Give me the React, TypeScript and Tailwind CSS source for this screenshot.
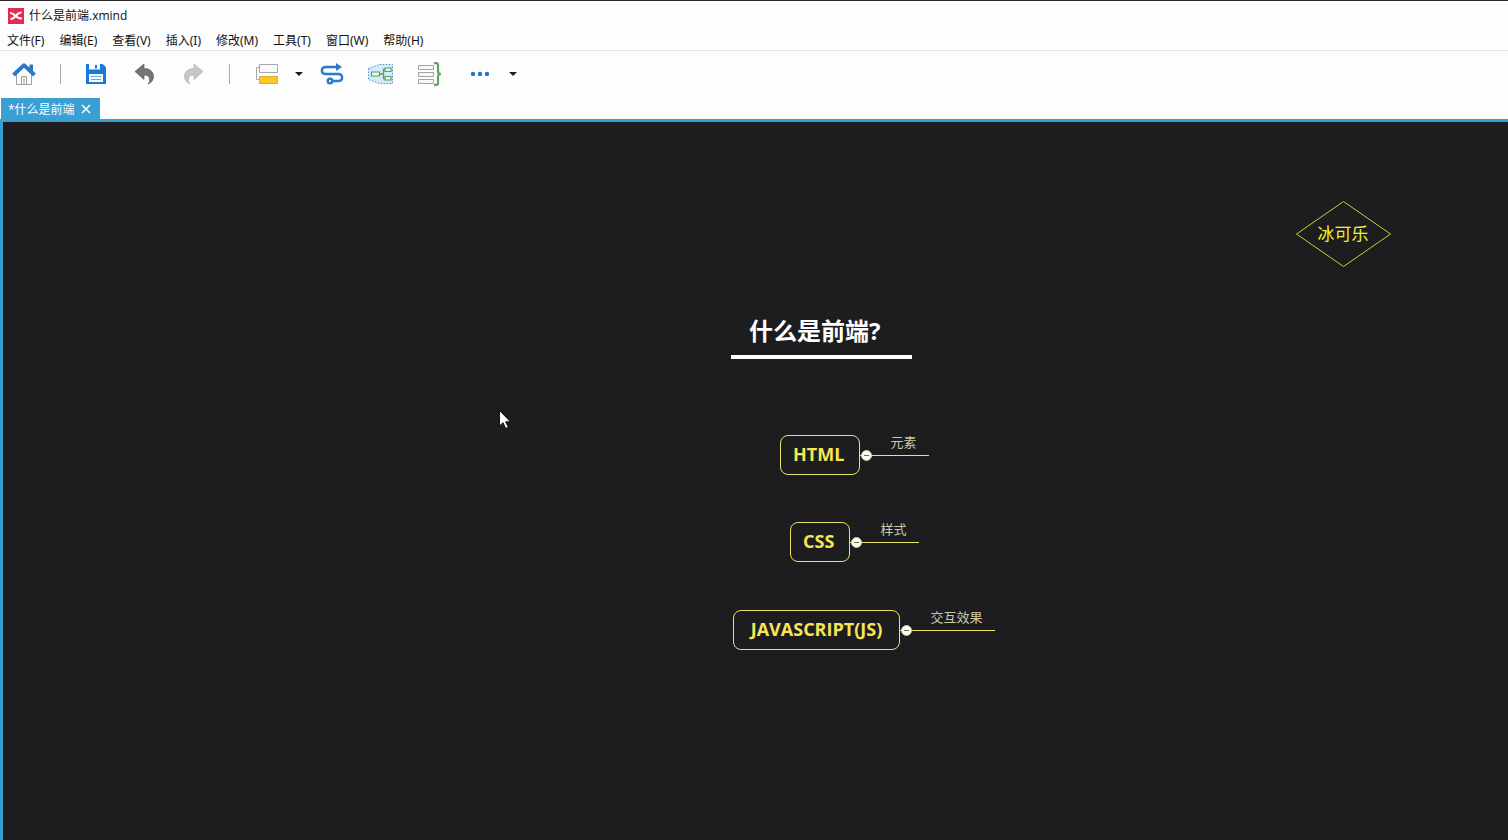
import type { ReactNode } from "react";

const menus = ["文件(F)", "编辑(E)", "查看(V)", "插入(I)", "修改(M)", "工具(T)", "窗口(W)", "帮助(H)"];

function ToolButton({ label, className = "w-6", children }: { label: string; className?: string; children: ReactNode }) {
    return (
        <button type="button" aria-label={label} className={`h-6 shrink-0 ${className}`}>
            {children}
        </button>
    );
}

function Caret({ label }: { label: string }) {
    return (
        <ToolButton label={label} className="w-[10px] -mx-2">
            <svg width="10" height="24" viewBox="0 0 10 24">
                <path d="M1 10h8L5 14z" fill="#1c1c1e" />
            </svg>
        </ToolButton>
    );
}

function Divider() {
    return <div className="h-5 w-px shrink-0 bg-[#a9a9a9]" />;
}

function Toolbar() {
    return (
        <div className="flex h-[47px] items-center gap-6 px-3 pb-[2px]">
            <ToolButton label="主页">
                <svg width="24" height="24" viewBox="0 0 24 24" fill="none">
                    <path d="M4.500 12v10.500h15V12L12 5z" fill="#fafafa" stroke="#a0a0a0" />
                    <path d="M9.500 22.500v-8h5v8M12 14.500v8" stroke="#a0a0a0" />
                    <path d="M17.500 2.500H21v7l-3.500-3z" fill="#2a72c6" />
                    <path d="M1.500 13L12 3.200 22.500 13" stroke="#2a76cc" strokeWidth="3.800" strokeLinejoin="round" />
                </svg>
            </ToolButton>
            <Divider />
            <ToolButton label="保存">
                <svg width="24" height="24" viewBox="0 0 24 24" fill="none">
                    <path d="M1 2h16.500L21 5v17H1z" fill="#1b79d8" />
                    <path d="M4 2h11v5.500H4z" fill="#f8fbff" />
                    <path d="M10 3h2v3.500h-2z" fill="#1b79d8" />
                    <path d="M4 12h14v8H4z" fill="#f8fbff" />
                    <path d="M6 14.500h10M6 17.500h10" stroke="#67a3dc" />
                </svg>
            </ToolButton>
            <ToolButton label="撤销">
                <svg width="24" height="24" viewBox="0 0 24 24">
                    <path d="M2 9.500L11 2v4.500c6 0 9.500 3.500 9.500 8 0 3.500-2 6-5.500 7.500 1.500-2 2-3.500 1.500-5.500-.5-2.500-2.500-3.500-5.500-3.500v4.500z" fill="#757575" stroke="#5c5c5c" strokeWidth=".7" />
                </svg>
            </ToolButton>
            <ToolButton label="重做">
                <svg width="24" height="24" viewBox="0 0 24 24">
                    <path d="M22 9.500L13 2v4.500c-6 0-9.500 3.500-9.500 8C3.500 18 5.500 20.500 9 22c-1.500-2-2-3.500-1.500-5.500.5-2.500 2.500-3.500 5.500-3.500v4.500z" fill="#c6c6c6" stroke="#b4b4b4" strokeWidth=".7" />
                </svg>
            </ToolButton>
            <Divider />
            <ToolButton label="主题">
                <svg width="24" height="24" viewBox="0 0 24 24" fill="none">
                    <path d="M5 5.500H2.500v12H5" stroke="#a6a8ad" />
                    <path d="M5.500 2.500h18v8h-18z" fill="#fcfcff" stroke="#a5a7b0" />
                    <path d="M5.500 14.500h18v7h-18z" fill="#f8c923" stroke="#dcae2a" />
                </svg>
            </ToolButton>
            <Caret label="主题选项" />
            <ToolButton label="联系">
                <svg width="24" height="24" viewBox="0 0 24 24" fill="none" stroke="#2b7bcc" strokeWidth="2.400">
                    <path d="M17 5H6C.5 5 .5 12 6 12h12c5.500 0 5.500 7 0 7h-5.500" />
                    <circle cx="10" cy="19" r="2.300" />
                    <path d="M16 1v8l6-4z" fill="#2b7bcc" stroke="none" />
                </svg>
            </ToolButton>
            <ToolButton label="外框" className="w-[26px]">
                <svg width="26" height="24" viewBox="0 0 26 24" fill="none">
                    <path d="M.5 6.500l11-4h13v19h-13l-11-4z" fill="#d3eaf8" />
                    <path d="M.5 6.500l11-4h13v19h-13l-11-4z" stroke="#4f8cc5" strokeDasharray="1.500 1.500" />
                    <path d="M11.500 12H15m3-4.500h-2.500v9H18" stroke="#58a05b" strokeWidth="1.300" />
                    <path d="M3.500 10h8v4h-8zM17 6h6v3.500h-6zM17 14.500h6V18h-6z" fill="#eef8f4" stroke="#58a05b" strokeWidth="1.200" />
                </svg>
            </ToolButton>
            <ToolButton label="概要">
                <svg width="24" height="24" viewBox="0 0 24 24" fill="none">
                    <path d="M.5 3.500h15v4H.5zM.5 10.500h15v4H.5zM.5 17.500h15v4H.5z" fill="#f7f7f7" stroke="#a3a3a3" />
                    <path d="M16 1.200h2.200Q20 1.200 20 3v6.500q0 2.500 3 2.500-3 0-3 2.500V21q0 1.800-1.800 1.800H16" stroke="#62a45e" strokeWidth="2.200" />
                </svg>
            </ToolButton>
            <ToolButton label="更多" className="w-[26px]">
                <svg width="26" height="24" viewBox="0 0 26 24" fill="#2b72cd">
                    <circle cx="7" cy="12" r="2.200" />
                    <circle cx="14" cy="12" r="2.200" />
                    <circle cx="21" cy="12" r="2.200" />
                </svg>
            </ToolButton>
            <Caret label="更多选项" />
        </div>
    );
}

function Topic({ title, child, className, boxClassName, childClassName }: { title: string; child: string; className: string; boxClassName: string; childClassName: string }) {
    return (
        <div className={`absolute flex items-start whitespace-nowrap ${className}`}>
            <div className={`flex h-10 items-center rounded-lg border border-[#e9e46c] px-3 pb-[2px] text-lg font-bold text-[#f7e653] ${boxClassName}`}>
                {title}
            </div>
            <div className={`relative flex h-[21px] items-start justify-center border-b border-[#e9e46c] pl-[18px] text-[13px] leading-[14px] text-[#ccc8a5] ${childClassName}`}>
                <button
                    type="button"
                    aria-label={`折叠 ${title}`}
                    className="absolute left-px -bottom-[6px] flex h-[11px] w-[11px] items-center justify-center rounded-full border border-[#c9c49a] bg-[#fffdf0]"
                >
                    <span className="h-px w-[5px] bg-[#6b6860]" />
                </button>
                {child}
            </div>
        </div>
    );
}

function Canvas() {
    return (
        <main className="relative flex-1 overflow-hidden border-t-[3px] border-l-[3px] border-[#3a9fcd] bg-[#1d1d1f]">
            <h1 className="absolute left-[728px] top-[189px] w-[181px] border-b-4 border-white pl-[18px] pb-1 text-2xl leading-10 font-bold whitespace-nowrap text-white">
                什么是前端?
            </h1>

            <Topic title="HTML" child="元素" className="left-[777px] top-[313px]" boxClassName="w-20" childClassName="w-[69px]" />
            <Topic title="CSS" child="样式" className="left-[787px] top-[400px]" boxClassName="w-[60px]" childClassName="w-[69px]" />
            <Topic title="JAVASCRIPT(JS)" child="交互效果" className="left-[730px] top-[488px]" boxClassName="w-[167px] justify-center" childClassName="w-[95px]" />

            <div className="absolute left-[1292px] top-[79px] flex h-[67px] w-24 items-center justify-center text-[17px] text-[#f1f032]">
                <svg className="absolute inset-0" width="96" height="67" viewBox="0 0 96 67" fill="none">
                    <path d="M1.500 33L48.500.5l47 32.500-47 32.500z" stroke="#c9cf35" />
                </svg>
                <span className="relative">冰可乐</span>
            </div>

            <svg className="absolute left-[496px] top-[288px]" width="14" height="20" viewBox="0 0 14 20">
                <path d="M.5.500v15.500l3.500-3.300 2.700 5.800 2.600-1.200-2.600-5.500h4.800z" fill="#fff" stroke="#111" />
            </svg>
        </main>
    );
}

export default function App() {
    return (
        <div className="flex min-h-screen flex-col bg-[#fdfdfd] font-['Open_Sans','Noto_Sans_CJK_SC',sans-serif] text-xs text-[#111]">
            <header className="border-t border-[#2a2529]">
                <div className="flex h-[30px] items-center gap-[5px] px-2">
                    <svg width="16" height="16" viewBox="0 0 16 16" fill="none">
                        <path d="M0 0h16v16H0z" fill="#e62b50" />
                        <path d="M2 5c3.500 0 4 1.500 5.500 3s3 2.500 6.500 2.500M2.500 11C5.500 11 6 9.500 7.500 8s2.500-3.500 6-3.500" stroke="#fff" strokeWidth="2.200" />
                    </svg>
                    <span>什么是前端.xmind</span>
                </div>
                <nav className="flex h-5 items-center gap-[15px] border-b border-[#e6e6e6] px-[7px] font-['Noto_Sans','Noto_Sans_CJK_SC',sans-serif] whitespace-nowrap">
                    {menus.map((menu) => (
                        <button key={menu} type="button">{menu}</button>
                    ))}
                </nav>
                <Toolbar />
                <div className="flex px-px">
                    <div className="flex h-[21px] items-center gap-[6px] bg-[#3a9fd3] pr-[9px] pl-[7px] whitespace-nowrap text-white">
                        <span className="pt-[2px]">*什么是前端</span>
                        <button type="button" aria-label="关闭">
                            <svg width="10" height="10" viewBox="0 0 10 10" stroke="#fff" strokeWidth="1.500">
                                <path d="M1 1l8 8M9 1L1 9" />
                            </svg>
                        </button>
                    </div>
                </div>
            </header>
            <Canvas />
        </div>
    );
}
